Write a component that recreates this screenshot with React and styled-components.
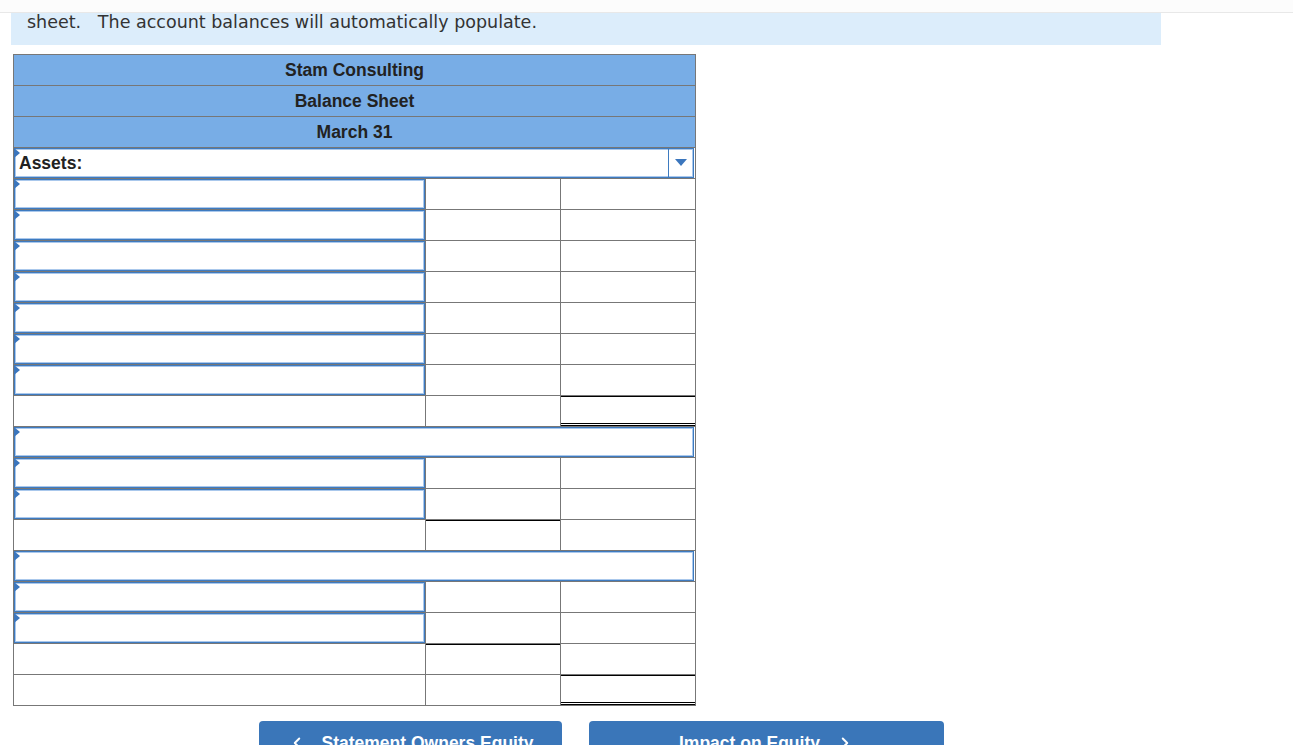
import React from 'react'
import styled, { createGlobalStyle } from 'styled-components'
import { ChevronLeft, ChevronRight } from 'lucide-react'

const GlobalStyle = createGlobalStyle`
  body {
    margin: 0;
    background: #fff;
    font-family: "Liberation Sans", Arial, sans-serif;
  }
`

// rows below the Assets dropdown
// kind: input (col1 input + 2 cells), full (full width input), blank
const rows = [
  { kind: 'input' },
  { kind: 'input' },
  { kind: 'input' },
  { kind: 'input' },
  { kind: 'input' },
  { kind: 'input' },
  { kind: 'input' },
  { kind: 'blank', mark: [null, null, 'total'] },
  { kind: 'full' },
  { kind: 'input' },
  { kind: 'input' },
  { kind: 'blank', mark: [null, 'sub', null] },
  { kind: 'full' },
  { kind: 'input' },
  { kind: 'input' },
  { kind: 'blank', mark: [null, 'sub', null] },
  { kind: 'blank', mark: [null, null, 'total'] },
]

const lines = {
  sub: 'inset 0 1px 0 #000',
  total: 'inset 0 1px 0 #000, inset 0 -1px 0 #000, inset 0 -2px 0 #fff, inset 0 -3px 0 #000',
}

function Field({ label, arrow, wide }) {
  return (
    <InputBox wide={wide}>
      <Flag />
      <Label>{label}</Label>
      {arrow && (
        <ArrowBox>
          <svg width="12" height="8" viewBox="0 0 12 8">
            <path d="M0 0 H12 L6 7 Z" fill="#3b76bd" />
          </svg>
        </ArrowBox>
      )}
    </InputBox>
  )
}

export default function App() {
  return (
    <>
      <GlobalStyle />
      <TopBar />
      <Main>
        <Note>sheet.&nbsp;&nbsp; The account balances will automatically populate.</Note>
        <Sheet>
          <colgroup>
            <col style={{ width: 412 }} />
            <col style={{ width: 135 }} />
            <col style={{ width: 135 }} />
          </colgroup>
          <tbody>
            <tr><Head colSpan={3}>Stam Consulting</Head></tr>
            <tr><Head colSpan={3}>Balance Sheet</Head></tr>
            <tr><Head colSpan={3}>March 31</Head></tr>
            <tr>
              <Cell colSpan={3}><Field label="Assets:" arrow wide /></Cell>
            </tr>
            {rows.map((r, i) => {
              if (r.kind === 'full') {
                return (
                  <tr key={i}>
                    <Cell colSpan={3}><Field wide /></Cell>
                  </tr>
                )
              }
              const m = r.mark || []
              return (
                <tr key={i}>
                  <Cell mark={m[0]}>{r.kind === 'input' && <Field />}</Cell>
                  <Cell mark={m[1]} />
                  <Cell mark={m[2]} />
                </tr>
              )
            })}
          </tbody>
        </Sheet>
        <Buttons>
          <NavButton w={303}>
            <ChevronLeft size={18} strokeWidth={2.6} />
            <span>Statement Owners Equity</span>
          </NavButton>
          <NavButton w={355}>
            <span>Impact on Equity</span>
            <ChevronRight size={18} strokeWidth={2.6} />
          </NavButton>
        </Buttons>
      </Main>
    </>
  )
}

const TopBar = styled.div`
  height: 12px;
  background: #fcfcfc;
  border-bottom: 1px solid #e8e8e8;
`

const Main = styled.div`
  padding-left: 11px;
`

const Note = styled.div`
  width: 1134px;
  background: #dcedfb;
  color: #333;
  font-family: "DejaVu Sans", Verdana, sans-serif;
  font-size: 17.5px;
  line-height: 18px;
  padding: 0 0 14px 16px;
`

const Sheet = styled.table`
  margin: 9px 0 0 2px;
  border-collapse: collapse;
  table-layout: fixed;
  width: 683px;
  border: 1px solid #777;
`

const Head = styled.td`
  height: 30px;
  padding: 0;
  background: #78ade6;
  border: 1px solid #777;
  text-align: center;
  font-weight: bold;
  font-size: 17.5px;
  color: #222;
`

const Cell = styled.td`
  height: 30px;
  padding: 0;
  border: 1px solid #777;
  vertical-align: top;
  box-shadow: ${p => (p.mark ? lines[p.mark] : 'none')};
`

const InputBox = styled.div`
  position: relative;
  display: flex;
  align-items: center;
  height: 30px;
  margin-right: ${p => (p.wide ? '1px' : '0')};
  box-sizing: border-box;
  border: 1px solid #3e7bc0;
  box-shadow: inset 0 0 0 1px #aac8ec;
  background: #fff;
`

const Flag = styled.span`
  position: absolute;
  left: -1px;
  top: -1px;
  width: 0;
  height: 0;
  border-left: 6px solid #3b76bd;
  border-top: 5px solid transparent;
  border-bottom: 5px solid transparent;
`

const Label = styled.span`
  flex: 1;
  padding-left: 4px;
  font-weight: bold;
  font-size: 17.5px;
  color: #222;
`

const ArrowBox = styled.span`
  display: flex;
  align-items: center;
  justify-content: center;
  width: 24px;
  align-self: stretch;
  border-left: 1px solid #3e7bc0;
`

const Buttons = styled.div`
  display: flex;
  gap: 27px;
  margin: 15px 0 0 248px;
`

const NavButton = styled.button`
  width: ${p => p.w}px;
  height: 40px;
  display: flex;
  align-items: flex-start;
  justify-content: center;
  gap: 16px;
  padding: 12px 0 0;
  border: none;
  border-radius: 4px 4px 0 0;
  background: #3a76b9;
  color: #fff;
  font-family: "Liberation Sans", Arial, sans-serif;
  font-weight: bold;
  font-size: 17.5px;
  svg { margin-top: 1px; }
`
